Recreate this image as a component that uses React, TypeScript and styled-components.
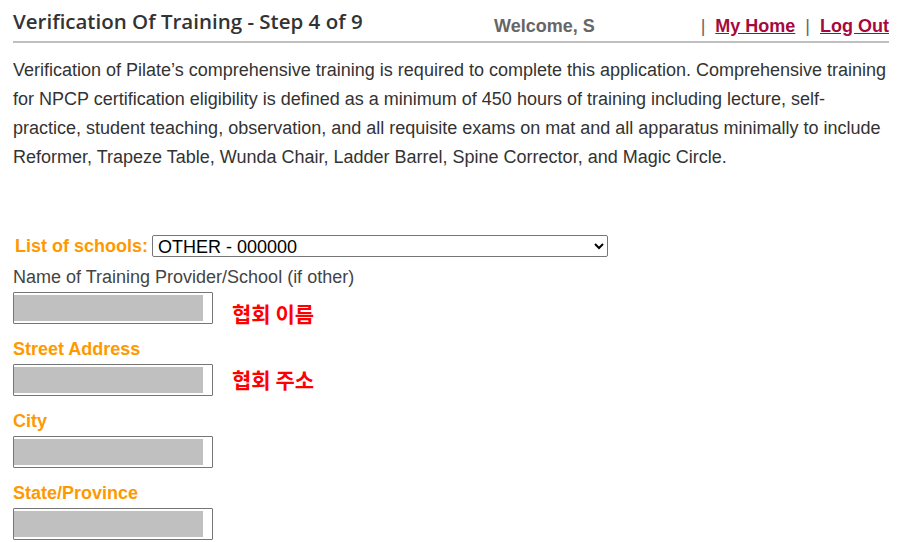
import React, { FC } from "react";
import styled, { createGlobalStyle } from "styled-components";

const GlobalStyle = createGlobalStyle`
  html, body {
    margin: 0;
    padding: 0;
    background: #ffffff;
  }

  body {
    font-family: "Liberation Sans", Arial, sans-serif;
    color: #333333;
  }
`;

type Field = {
  label: string;
  note?: string;
  noteOffset?: number;
  plain?: boolean;
};

const fields: Field[] = [
  {
    label: "Name of Training Provider/School (if other)",
    note: "협회 이름",
    noteOffset: 11,
    plain: true,
  },
  { label: "Street Address", note: "협회 주소", noteOffset: 5 },
  { label: "City" },
  { label: "State/Province" },
];

const App: FC = () => {
  return (
    <>
      <GlobalStyle />
      <Page>
        <Header>
          <Title>Verification Of Training - Step 4 of 9</Title>
          <Welcome>Welcome, S</Welcome>
          <Nav>
            <Pipe>|</Pipe>
            <NavLink href="#">My Home</NavLink>
            <Pipe>|</Pipe>
            <NavLink href="#">Log Out</NavLink>
          </Nav>
        </Header>

        <Intro>
          Verification of Pilate’s comprehensive training is required to
          complete this application. Comprehensive training for NPCP
          certification eligibility is defined as a minimum of 450 hours of
          training including lecture, self-practice, student teaching,
          observation, and all requisite exams on mat and all apparatus
          minimally to include Reformer, Trapeze Table, Wunda Chair, Ladder
          Barrel, Spine Corrector, and Magic Circle.
        </Intro>

        <Form>
          <SchoolRow>
            <SchoolLabel htmlFor="school">List of schools:</SchoolLabel>
            <SchoolSelect id="school" defaultValue="other">
              <option value="other">OTHER - 000000</option>
            </SchoolSelect>
          </SchoolRow>

          {fields.map((field) => (
            <FieldGroup key={field.label}>
              <FieldLabel plain={field.plain}>{field.label}</FieldLabel>
              <InputRow>
                <InputBox>
                  <Filled />
                </InputBox>
                {field.note && (
                  <Note offset={field.noteOffset ?? 0}>{field.note}</Note>
                )}
              </InputRow>
            </FieldGroup>
          ))}
        </Form>
      </Page>
    </>
  );
};

export default App;

const Page = styled.div`
  width: 876px;
  margin-left: 13px;
`;

const Header = styled.div`
  display: grid;
  grid-template-columns: 481px 1fr auto;
  align-items: end;
  height: 43px;
  box-sizing: border-box;
  border-bottom: 2px solid #c0c0c0;
`;

const Title = styled.h1`
  margin: 0 0 6px;
  font-family: "Open Sans", sans-serif;
  font-size: 20.5px;
  font-weight: 600;
  line-height: 27px;
  color: #333333;
`;

const Welcome = styled.div`
  margin-bottom: 5px;
  font-size: 18px;
  font-weight: bold;
  line-height: 20px;
  color: #666666;
`;

const Nav = styled.div`
  display: flex;
  align-items: baseline;
  gap: 10px;
  margin-bottom: 5px;
  font-size: 18px;
  font-weight: bold;
  line-height: 20px;
`;

const Pipe = styled.span`
  color: #666666;
  font-weight: normal;
`;

const NavLink = styled.a`
  color: #a6093d;
  text-decoration: underline;
`;

const Intro = styled.p`
  margin: 13px 0 0;
  font-size: 18px;
  line-height: 29px;
  color: #333333;
`;

const Form = styled.form`
  display: flex;
  flex-direction: column;
  margin-top: 63px;
`;

const SchoolRow = styled.div`
  display: flex;
  align-items: center;
  gap: 4px;
  height: 22px;
  padding-left: 2px;
`;

const SchoolLabel = styled.label`
  font-size: 18px;
  font-weight: bold;
  color: #ff9900;
`;

const SchoolSelect = styled.select`
  width: 456px;
  height: 22px;
  box-sizing: border-box;
  padding: 0 1px;
  border: 1px solid #767676;
  border-radius: 2px;
  background: #ffffff;
  font-family: "Liberation Sans", Arial, sans-serif;
  font-size: 18px;
  color: #000000;
`;

const FieldGroup = styled.div`
  display: flex;
  flex-direction: column;
  gap: 5px;
  margin-top: 10px;

  & + & {
    margin-top: 15px;
  }
`;

const FieldLabel = styled.div<{ plain?: boolean }>`
  font-size: 18px;
  line-height: 20px;
  font-weight: ${({ plain }) => (plain ? "normal" : "bold")};
  color: ${({ plain }) => (plain ? "#444444" : "#ff9900")};
`;

const InputRow = styled.div`
  display: flex;
  align-items: flex-start;
  gap: 19px;
  height: 32px;
`;

const InputBox = styled.div`
  width: 200px;
  height: 32px;
  box-sizing: border-box;
  padding: 2px 9px 2px 0;
  border: 1px solid #767676;
  border-radius: 1px;
  background: #ffffff;
`;

const Filled = styled.div`
  height: 100%;
  background: #c0c0c0;
`;

const Note = styled.span<{ offset: number }>`
  margin-top: ${({ offset }) => offset}px;
  font-family: "Noto Sans CJK KR", sans-serif;
  font-size: 21px;
  font-weight: bold;
  line-height: 21px;
  color: #ff0000;
`;
